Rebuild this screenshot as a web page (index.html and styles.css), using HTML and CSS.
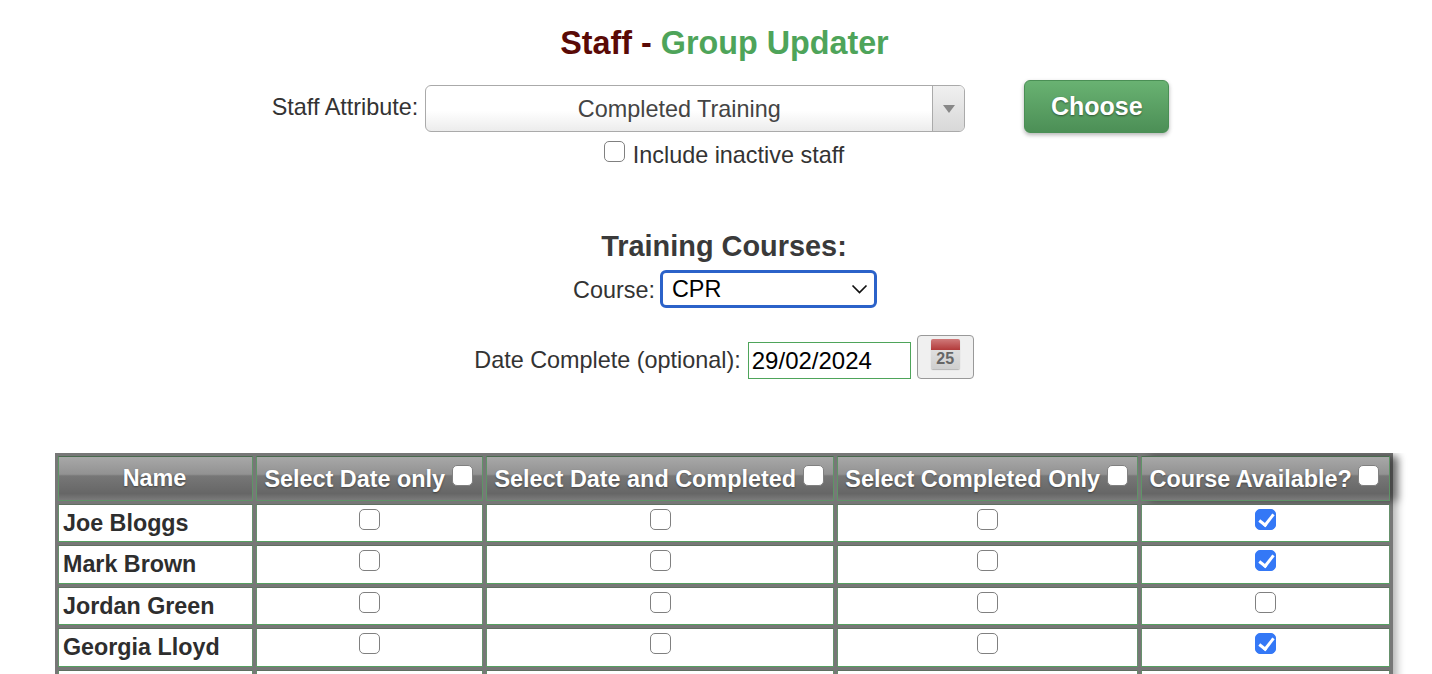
FILE: index.html
```html
<!DOCTYPE html>
<html lang="en">

<head>
  <meta charset="UTF-8" />
  <title>Staff - Group Updater</title>
  <link rel="stylesheet" href="styles.css">
</head>

<body>
  <div class="page">
    <h1 class="page-title">Staff - <span class="accent">Group Updater</span></h1>

    <form class="attribute-row">
      <label class="attribute-label">Staff Attribute:</label>
      <div class="fancy-select">
        <span class="fancy-value">Completed Training</span>
        <span class="fancy-arrow"><span class="arrow-down"></span></span>
      </div>
      <button type="button" class="btn-choose">Choose</button>
    </form>
    <div class="inactive-row">
      <input type="checkbox" class="check" />
      <span>Include inactive staff</span>
    </div>

    <h2 class="section-title">Training Courses:</h2>
    <div class="course-row">
      <label class="course-label">Course:</label>
      <div class="course-select">
        <span class="course-value">CPR</span>
        <svg width="17" height="10" viewBox="0 0 17 10">
          <path d="M1.5 1.5 L8.5 8.5 L15.5 1.5" fill="none" stroke="#111" stroke-width="1.7" />
        </svg>
      </div>
    </div>
    <div class="date-row">
      <label class="date-label">Date Complete (optional):</label>
      <input type="text" class="date-input" value="29/02/2024" />
      <button type="button" class="btn-calendar">
        <span class="cal-icon">
          <span class="cal-top"></span>
          <span class="cal-day">25</span>
        </span>
      </button>
    </div>

    <!-- Staff table, runs on below the fold -->
    <div class="table-wrap">
      <table class="staff-table">
        <colgroup>
          <col class="col-name" />
          <col class="col-date" />
          <col class="col-both" />
          <col class="col-done" />
          <col class="col-avail" />
        </colgroup>
        <thead>
          <tr>
            <th>Name</th>
            <th>Select Date only <input type="checkbox" class="check head-check" /></th>
            <th>Select Date and Completed <input type="checkbox" class="check head-check" /></th>
            <th>Select Completed Only <input type="checkbox" class="check head-check" /></th>
            <th>Course Available? <input type="checkbox" class="check head-check" /></th>
          </tr>
        </thead>
        <tbody>
          <tr>
            <td class="name">Joe Bloggs</td>
            <td><input type="checkbox" class="check" /></td>
            <td><input type="checkbox" class="check" /></td>
            <td><input type="checkbox" class="check" /></td>
            <td><input type="checkbox" class="check" checked /></td>
          </tr>
          <tr>
            <td class="name">Mark Brown</td>
            <td><input type="checkbox" class="check" /></td>
            <td><input type="checkbox" class="check" /></td>
            <td><input type="checkbox" class="check" /></td>
            <td><input type="checkbox" class="check" checked /></td>
          </tr>
          <tr>
            <td class="name">Jordan Green</td>
            <td><input type="checkbox" class="check" /></td>
            <td><input type="checkbox" class="check" /></td>
            <td><input type="checkbox" class="check" /></td>
            <td><input type="checkbox" class="check" /></td>
          </tr>
          <tr>
            <td class="name">Georgia Lloyd</td>
            <td><input type="checkbox" class="check" /></td>
            <td><input type="checkbox" class="check" /></td>
            <td><input type="checkbox" class="check" /></td>
            <td><input type="checkbox" class="check" checked /></td>
          </tr>
          <tr>
            <td class="name">&nbsp;</td>
            <td></td>
            <td></td>
            <td></td>
            <td></td>
          </tr>
        </tbody>
      </table>
    </div>
  </div>
</body>

</html>
```
FILE: styles.css
```css
* {
  margin: 0;
  padding: 0;
  box-sizing: border-box;
  font-family: "Liberation Sans", Arial, sans-serif;
}

html,
body {
  height: 674px;
  overflow: hidden;
}

body {
  background: #fff;
  color: #333;
  font-size: 23.4px;
}

.page {
  margin-left: 55px;
  width: 1338px;
  padding-top: 24px;
}

.page-title {
  text-align: center;
  font-size: 32.3px;
  line-height: 38px;
  font-weight: bold;
  color: #5a0a06;
  padding-left: 1px;
}

.page-title .accent {
  color: #4ea45a;
}

/* Attribute picker */
.attribute-row {
  display: flex;
  justify-content: center;
  align-items: flex-start;
  margin-top: 18px;
  padding-right: 7px;
}

.attribute-label {
  margin-top: 14px;
  line-height: 26px;
  margin-right: 7px;
}

.fancy-select {
  display: flex;
  width: 540px;
  height: 47px;
  margin-top: 5px;
  border: 1px solid #aaa;
  border-radius: 6px;
  background: linear-gradient(#fff 55%, #ececec);
  overflow: hidden;
}

.fancy-value {
  flex: 1;
  text-align: center;
  line-height: 46px;
  color: #444;
}

.fancy-arrow {
  width: 32px;
  display: flex;
  align-items: center;
  justify-content: center;
  border-left: 1px solid #aaa;
  background: linear-gradient(#f0f0f0, #d8d8d8);
}

.arrow-down {
  width: 0;
  height: 0;
  border-left: 6px solid transparent;
  border-right: 6px solid transparent;
  border-top: 8px solid #888;
}

.btn-choose {
  width: 145px;
  height: 53px;
  margin-left: 59px;
  border: 1px solid #4a8f55;
  border-radius: 6px;
  background: linear-gradient(#69b272, #4c8f56);
  color: #fff;
  font-size: 25px;
  font-weight: bold;
  text-shadow: 0 1px 2px rgba(0, 0, 0, 0.45);
  box-shadow: 0 2px 4px rgba(0, 0, 0, 0.3);
}

.inactive-row {
  display: flex;
  justify-content: center;
  align-items: flex-start;
  gap: 8px;
  margin-top: 8px;
  line-height: 28px;
}

/* Training course section */
.section-title {
  text-align: center;
  font-size: 28.9px;
  line-height: 32px;
  font-weight: bold;
  color: #3a3a3a;
  margin-top: 61px;
}

.course-row {
  display: flex;
  justify-content: center;
  align-items: center;
  gap: 5px;
  margin-top: 8px;
  padding-left: 2px;
}

.course-label {
  margin-top: 3px;
}

.course-select {
  display: flex;
  align-items: center;
  justify-content: space-between;
  width: 217px;
  height: 38px;
  padding: 0 6px 0 9px;
  border: 3px solid #2b62c9;
  border-radius: 6px;
  background: #fff;
  color: #000;
}

.course-value {
  padding-top: 1px;
}

.date-row {
  display: flex;
  justify-content: center;
  align-items: flex-start;
  gap: 7px;
  margin-top: 27px;
}

.date-label {
  margin-top: 11px;
  line-height: 28px;
}

.date-input {
  width: 163px;
  height: 37px;
  padding: 0 3px;
  border: 1px solid #4ea45a;
  font-size: 24px;
  color: #000;
  margin-top: 7px;
}

.btn-calendar {
  width: 57px;
  height: 44px;
  margin-left: -1px;
  display: flex;
  justify-content: center;
  align-items: flex-start;
  padding-top: 3px;
  border: 1px solid #999;
  border-radius: 4px;
  background: #f0f0f0;
}

.cal-icon {
  display: block;
  width: 29px;
  height: 30px;
  border-radius: 2px;
  background: linear-gradient(#e8e8e8, #cfcfcf);
  box-shadow: 0 1px 1px rgba(0, 0, 0, 0.25);
  overflow: hidden;
}

.cal-top {
  display: block;
  height: 11px;
  background: linear-gradient(#d07a7a, #b23a3a);
}

.cal-day {
  display: block;
  font-size: 16px;
  line-height: 18px;
  font-weight: bold;
  color: #666;
  text-align: center;
}

/* Table */
.table-wrap {
  width: 1360px;
  height: 221px;
  margin-top: 74px;
  overflow: hidden;
}

.staff-table {
  width: 1338px;
  table-layout: fixed;
  border-collapse: separate;
  border-spacing: 3px;
  background: #777;
  box-shadow: 4px 4px 8px rgba(0, 0, 0, 0.3);
}

.col-name { width: 195px; }
.col-date { width: 227px; }
.col-both { width: 348px; }
.col-done { width: 301px; }
.col-avail { width: 249px; }

.staff-table th {
  height: 45px;
  border: 1px solid #5f9467;
  border-top-color: #4a6a4e;
  padding: 0 3px 0 1px;
  color: #fff;
  font-size: 23.4px;
  font-weight: bold;
  white-space: nowrap;
  background: linear-gradient(#a8a8a8, #929292 40%, #777 44%, #666 85%, #7a7a7a);
  text-shadow: 0 1px 2px rgba(0, 0, 0, 0.4);
}

.staff-table th:last-child {
  box-shadow: 8px 0 8px rgba(0, 0, 0, 0.4);
}

.staff-table td {
  height: 38.4px;
  border: 1px solid #66916c;
  border-top-color: #5f6f60;
  border-bottom-color: #55a060;
  background: #fff;
  text-align: center;
  vertical-align: top;
  padding-top: 4px;
}

.staff-table td.name {
  text-align: left;
  padding: 4px 0 0 4px;
  font-size: 23.3px;
  line-height: 28px;
  font-weight: bold;
  color: #2e2e2e;
}

/* Checkboxes */
.check {
  appearance: none;
  display: inline-block;
  position: relative;
  width: 21px;
  height: 21px;
  border: 1.5px solid #808080;
  border-radius: 5px;
  background: #fff;
}

.check:checked {
  border-color: #3478f6;
  background: #3478f6;
}

.check:checked::after {
  content: "";
  position: absolute;
  left: 6px;
  top: 1px;
  width: 6px;
  height: 12px;
  border: solid #fff;
  border-width: 0 3px 3px 0;
  transform: rotate(38deg);
}

.head-check {
  vertical-align: 1px;
}
```
